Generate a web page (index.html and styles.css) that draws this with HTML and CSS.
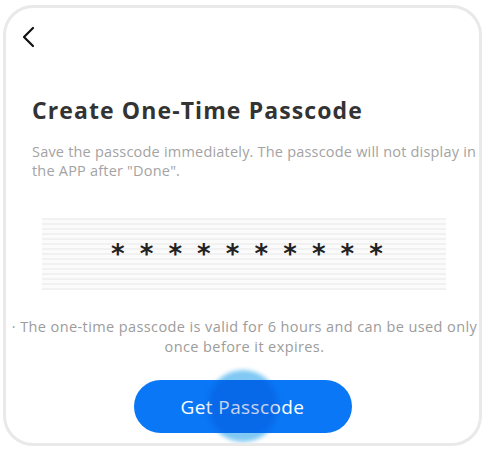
FILE: index.html
```html
<!DOCTYPE html>
<html>
<head>
<meta charset="utf-8">
<link rel="stylesheet" href="styles.css">
</head>
<body>
<div class="card">
  <div class="back">
    <svg width="14" height="22" viewBox="0 0 14 22"><path d="M12 2 L3 11 L12 20" fill="none" stroke="#111" stroke-width="2.2" stroke-linecap="round" stroke-linejoin="round"/></svg>
  </div>
  <h1 class="title">Create One-Time Passcode</h1>
  <p class="desc">Save the passcode immediately. The passcode will not display in the APP after "Done".</p>
  <div class="code"><span class="stars">**********</span></div>
  <p class="note">· The one-time passcode is valid for 6 hours and can be used only once before it expires.</p>
  <div class="btn-wrap">
    <span class="ripple"></span>
    <button class="btn"><span class="ripple-in"></span><span class="btn-label">Get Passcode</span></button>
  </div>
</div>
</body>
</html>
```
FILE: styles.css
```css
html, body {
  margin: 0;
  padding: 0;
  background: #fff;
}
body {
  font-family: "Open Sans", "Noto Sans", sans-serif;
}
.card {
  box-sizing: border-box;
  width: 479px;
  height: 441px;
  margin: 5px 0 0 3px;
  border: 3px solid #e9e9e9;
  border-radius: 30px;
  background: #fff;
  display: flex;
  flex-direction: column;
  overflow: hidden;
}
.back {
  margin: 18px 0 0 15px;
  height: 22px;
}
.back svg { display: block; }
.title {
  margin: 48px 0 0 26px;
  font-size: 23px;
  line-height: 28px;
  font-weight: 700;
  color: #333;
  letter-spacing: 1.1px;
}
.desc {
  margin: 18px 0 0 26px;
  font-size: 14.5px;
  line-height: 19px;
  letter-spacing: 0.2px;
  color: #a3a3a3;
}
.code {
  margin: 38px 0 0 36px;
  width: 404px;
  height: 72px;
  background: repeating-linear-gradient(to bottom, #f1f1f1 0 2px, #fbfbfb 2px 5px);
  display: flex;
  align-items: center;
  justify-content: center;
}
.stars {
  font-family: "DejaVu Sans", sans-serif;
  font-weight: 700;
  font-size: 26px;
  letter-spacing: 15.1px;
  color: #222;
  margin-left: 21px;
}
.note {
  margin: 27px 0 0 0;
  padding: 0 0 0 4px;
  text-align: center;
  font-size: 14.5px;
  line-height: 20px;
  letter-spacing: 0.4px;
  color: #9c9c9c;
}
.btn-wrap {
  position: relative;
  margin: 23px auto 0;
  width: 218px;
  height: 53px;
}
.ripple {
  position: absolute;
  left: 73px;
  top: -10px;
  width: 72px;
  height: 72px;
  border-radius: 50%;
  background: #80c9f4;
  filter: blur(2px);
}
.btn {
  position: relative;
  width: 218px;
  height: 53px;
  border: none;
  border-radius: 27px;
  background: #0a78f6;
  color: #fff;
  font-family: "Open Sans", sans-serif;
  font-size: 19px;
  letter-spacing: 0.4px;
  padding: 0;
  overflow: hidden;
}
.ripple-in {
  position: absolute;
  left: 74px;
  top: -9px;
  width: 70px;
  height: 70px;
  border-radius: 50%;
  background: rgba(0, 50, 180, 0.22);
  filter: blur(3px);
  z-index: 2;
}
.btn-label {
  position: relative;
  z-index: 1;
}
```
